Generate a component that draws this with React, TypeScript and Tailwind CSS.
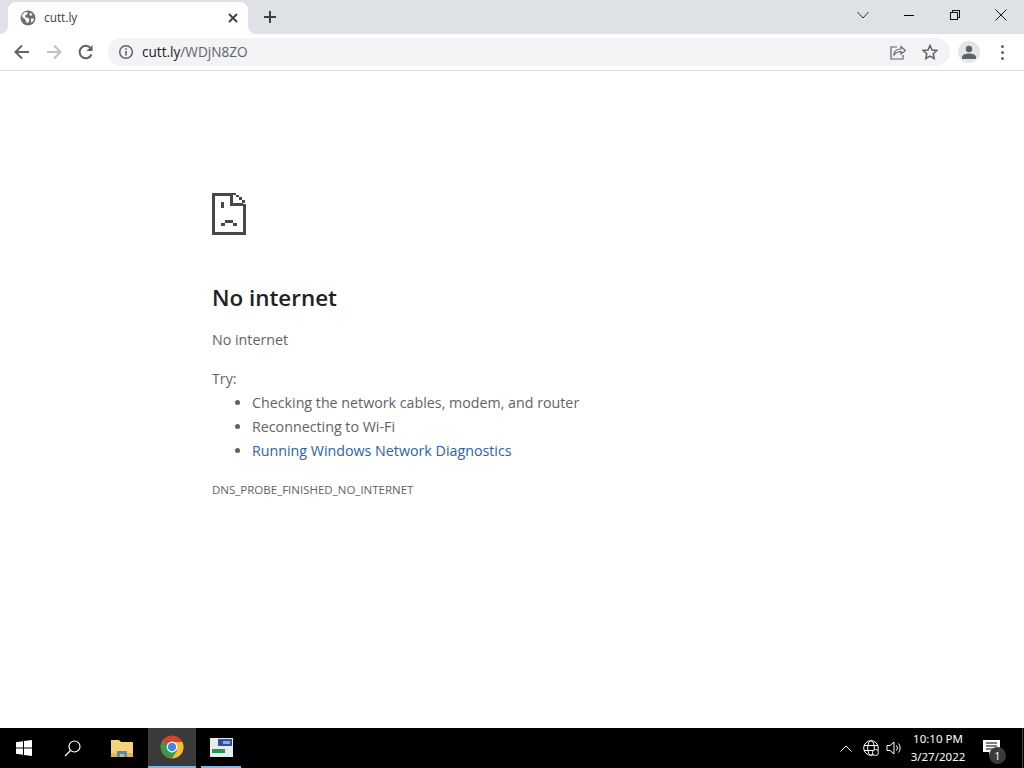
import React from "react";

function Sad() {
  return (
    <svg width="34" height="42" viewBox="0 0 34 42" shapeRendering="crispEdges" fill="#484848">
      <path d="M0 0h21v3H3v36h28V11h3v31H0z" />
      <path d="M18 0h3v10h10v3H18z" />
      <path d="M21 0h3v2h-3zM24 2h3v2h-3zM27 4h3v3h-3zM30 7h3v3h-3z" />
      <path d="M9 9h3v6H9zM9 30h4v3H9zM13 27h8v3h-8zM21 30h4v3h-4z" />
    </svg>
  );
}

function Globe() {
  return (
    <svg width="16" height="16" viewBox="0 0 16 16">
      <circle cx="8" cy="8" r="7.5" fill="#6b6f74" />
      <path d="M2 5l3-3 3 .5-1 2-2 1 .5 2 3 .5 1 2-1.500 3-1.500-.5L5 9 2.500 7.500z M10 2.500l2.500 2-1.500 1.500-1.500-1z M11 8.500h3l-1 3-2 1z" fill="#fff" />
    </svg>
  );
}

function Gray({ children }: { children: React.ReactNode }) {
  return (
    <svg width="20" height="20" viewBox="0 0 20 20" fill="none" stroke="#5f6368" strokeWidth="2">
      {children}
    </svg>
  );
}

function Chrome() {
  return (
    <svg width="24" height="24" viewBox="0 0 24 24">
      <circle cx="12" cy="12" r="11.500" fill="#d8432f" />
      <path d="M12 12 2.400 6.200A11.500 11.500 0 0 0 12 23.500l5-7z" fill="#3a9a4a" />
      <path d="M12 7h10.400A11.500 11.500 0 0 1 12 23.500l5-8z" fill="#f5c02e" />
      <circle cx="12" cy="12" r="5.400" fill="#fff" />
      <circle cx="12" cy="12" r="4.200" fill="#4a86e8" />
    </svg>
  );
}

export default function App() {
  return (
    <div className="w-[1024px] h-[768px] flex flex-col overflow-hidden bg-white font-['Open_Sans','Noto_Sans',sans-serif]">
      {/* tab strip */}
      <div className="h-[34px] bg-[#dee1e6] flex items-end shrink-0">
        <div className="relative ml-2 w-[240px] h-[32px] bg-white rounded-t-lg flex items-center pl-[12px] pr-[10px] text-[#3c4043]">
          <svg className="absolute left-[-8px] bottom-0" width="8" height="8" viewBox="0 0 8 8" fill="#fff"><path d="M8 0v8H0a8 8 0 0 0 8-8z" /></svg>
          <svg className="absolute right-[-8px] bottom-0" width="8" height="8" viewBox="0 0 8 8" fill="#fff"><path d="M0 0v8h8a8 8 0 0 1-8-8z" /></svg>
          <Globe />
          <span className="ml-[8px] text-[11.800px] flex-1">cutt.ly</span>
          <svg width="10" height="10" viewBox="0 0 10 10" stroke="#3c4043" strokeWidth="1.800"><path d="M1 1l8 8M9 1l-8 8" /></svg>
        </div>
        <div className="ml-[15px] h-[34px] flex items-center">
          <svg width="14" height="14" viewBox="0 0 14 14" stroke="#3c4043" strokeWidth="2"><path d="M7 1v12M1 7h12" /></svg>
        </div>
        <div className="flex-1" />
        <div className="h-[30px] mb-[4px] flex items-center text-black">
          <svg width="12" height="8" viewBox="0 0 12 8" fill="none" stroke="#333" strokeWidth="1"><path d="M.5 1l5.500 6 5.500-6" /></svg>
          <div className="w-[46px] flex justify-center ml-[17px]">
            <div className="w-[10px] h-px bg-black" />
          </div>
          <div className="w-[46px] flex justify-center">
            <svg width="10" height="10" viewBox="0 0 10 10" fill="none" stroke="#111" strokeWidth="1" shapeRendering="crispEdges"><path d="M.5 2.500h7v7h-7zM2.500 2.500v-2h7v7h-2" /></svg>
          </div>
          <div className="w-[46px] flex justify-center">
            <svg width="12" height="12" viewBox="0 0 12 12" stroke="#111" strokeWidth="1"><path d="M.5.500l11 11M11.500.500l-11 11" /></svg>
          </div>
        </div>
      </div>

      {/* toolbar */}
      <div className="h-[37px] shrink-0 bg-white border-b border-[#dadce0] flex items-center">
        <div className="ml-[12px] w-5 flex justify-center">
          <Gray><path d="M17 10H4M10 3.500 3.500 10l6.500 6.500" /></Gray>
        </div>
        <div className="ml-[12px] w-5 flex justify-center">
          <svg width="20" height="20" viewBox="0 0 20 20" fill="none" stroke="#bdc1c6" strokeWidth="2"><path d="M3 10h13M10 3.500 16.500 10 10 16.500" /></svg>
        </div>
        <div className="ml-[12px] w-5 flex justify-center">
          <Gray><path d="M15.500 12.500a6.200 6.200 0 1 1-.6-6L16 8" /><path d="M16.500 3v6h-6" fill="#5f6368" stroke="none" /></Gray>
        </div>
        <div className="ml-[12px] w-[842px] h-[28px] rounded-full bg-[#f1f3f4] flex items-center pl-[10px] pr-[12px]">
          <svg width="16" height="16" viewBox="0 0 16 16" fill="none"><circle cx="8" cy="8" r="6.300" stroke="#5f6368" strokeWidth="1.500" /><path d="M8 7v4.500M8 4.300v1.500" stroke="#5f6368" strokeWidth="1.600" /></svg>
          <span className="ml-[8px] text-[13.600px] text-[#202124]">cutt.ly<span className="text-[#5f6368]">/WDjN8ZO</span></span>
          <div className="flex-1" />
          <svg width="16" height="16" viewBox="0 0 16 16" fill="none" stroke="#5f6368" strokeWidth="1.200"><path d="M7 3H1v12h12v-4" /><path d="M4 11c0-4 3-6 7-6V2.500L15.500 6.500 11 10V7.500c-3 0-5 1-7 3.500z" /></svg>
          <svg className="ml-4" width="16" height="16" viewBox="0 0 16 16" fill="none" stroke="#5f6368" strokeWidth="1.500"><path d="M8 1.500l2 4.500 4.800.5-3.600 3.200 1 4.800L8 12.100l-4.200 2.400 1-4.800L1.200 6.500 6 6z" /></svg>
        </div>
        <div className="ml-[8px] w-[22px] h-[22px] rounded-full bg-[#e3e5e8] flex items-center justify-center">
          <svg width="14" height="14" viewBox="0 0 14 14" fill="#5f6368"><circle cx="7" cy="4" r="3.200" /><path d="M0 14v-2c0-2.500 4-3.500 7-3.500s7 1 7 3.500v2z" /></svg>
        </div>
        <div className="ml-[21px] flex flex-col gap-[3px]">
          <div className="w-[3px] h-[3px] rounded-full bg-[#5f6368]" />
          <div className="w-[3px] h-[3px] rounded-full bg-[#5f6368]" />
          <div className="w-[3px] h-[3px] rounded-full bg-[#5f6368]" />
        </div>
      </div>

      {/* page */}
      <div className="flex-1 pl-[212px] pt-[122px] text-[#5f6368]">
        <Sad />
        <h1 className="mt-[45px] text-[22.400px] leading-[36px] font-semibold text-[#202124]">No internet</h1>
        <p className="mt-[12px] text-[14.250px] leading-[24px]">No internet</p>
        <p className="mt-[15px] text-[14.250px] leading-[24px]">Try:</p>
        <ul className="list-disc pl-[40px] text-[14.250px] leading-[24px]">
          <li>Checking the network cables, modem, and router</li>
          <li>Reconnecting to Wi-Fi</li>
          <li><span className="text-[#2a62ad]">Running Windows Network Diagnostics</span></li>
        </ul>
        <p className="mt-[19px] text-[11.500px] leading-[16px]">DNS_PROBE_FINISHED_NO_INTERNET</p>
      </div>

      {/* taskbar */}
      <div className="h-[40px] shrink-0 bg-black flex items-stretch text-white">
        <div className="w-[48px] flex items-center justify-center">
          <svg width="16" height="16" viewBox="0 0 16 16" fill="#fff"><path d="M0 2.300l7-1V7.500H0zM8 1.100l8-1.100V7.500H8zM0 8.500h7v6.200l-7-1zM8 8.500h8V16l-8-1.100z" /></svg>
        </div>
        <div className="w-[48px] flex items-center justify-center">
          <svg width="17" height="17" viewBox="0 0 17 17" fill="none" stroke="#fff" strokeWidth="1.200"><circle cx="10.500" cy="6.500" r="5.500" /><path d="M6.500 10.500L1 16" /></svg>
        </div>
        <div className="w-[52px] flex items-center justify-center">
          <svg width="22" height="18" viewBox="0 0 22 18"><path d="M0 1h8l2 2h12v15H0z" fill="#f6d27a" /><path d="M0 14h22v4H0z" fill="#e8b64a" /><path d="M6 18v-6h10v6h-3v-3H9v3z" fill="#4a8fc9" /></svg>
        </div>
        <div className="w-[48px] bg-[#3a3a3a] flex items-center justify-center border-b-2 border-[#76b9ed]"><Chrome /></div>
        <div className="w-[40px] ml-[5px] flex items-center justify-center border-b-2 border-[#76b9ed]">
          <svg width="23" height="19" viewBox="0 0 23 19"><rect width="23" height="19" fill="#e8ecef" /><rect x="8" y="1" width="14" height="7" fill="#2d4f9e" /><rect x="2" y="11" width="13" height="4" fill="#1f9a4f" /><rect x="13" y="3" width="7" height="3" fill="#88aee8" /></svg>
        </div>
        <div className="flex-1" />
        <div className="flex items-center">
          <svg width="12" height="7" viewBox="0 0 12 7" fill="none" stroke="#fff" strokeWidth="1"><path d="M.5 6.500L6 1l5.500 5.500" /></svg>
          <svg className="ml-[11px]" width="16" height="16" viewBox="0 0 16 16" fill="none" stroke="#fff" strokeWidth="1"><circle cx="8" cy="8" r="7.300" /><ellipse cx="8" cy="8" rx="3.300" ry="7.300" /><path d="M1 5.500h14M1 10.500h14" /><circle cx="12.500" cy="12.500" r="3" fill="#000" /></svg>
          <svg className="ml-[7px]" width="17" height="16" viewBox="0 0 17 16" fill="none" stroke="#fff" strokeWidth="1"><path d="M1 5.500h3l4-3.500v12l-4-3.500H1z" /><path d="M10.500 5.500a4 4 0 0 1 0 5M12.500 3.500a7 7 0 0 1 0 9" /></svg>
          <div className="w-[60px] ml-[5px] flex flex-col items-center text-[11.500px] leading-[18px] font-['Noto_Sans','Open_Sans',sans-serif]">
            <span>10:10 PM</span>
            <span>3/27/2022</span>
          </div>
          <div className="relative w-[32px] h-[40px] ml-[9px] mr-[13px]">
            <svg className="absolute left-[6px] top-[12px]" width="17" height="16" viewBox="0 0 17 16" fill="#fff"><path d="M0 0h17v12H9l-3 3v-3H0z" /><path d="M3 3h11M3 6h11M3 9h7" stroke="#000" strokeWidth="1" /></svg>
            <div className="absolute left-[12px] top-[19px] w-[17px] h-[17px] rounded-full bg-[#3a3a3a] flex items-center justify-center text-[11px] leading-none">1</div>
          </div>
          <div className="w-px h-[40px] bg-[#444]" />
          <div className="w-[1px]" />
        </div>
      </div>
    </div>
  );
}
